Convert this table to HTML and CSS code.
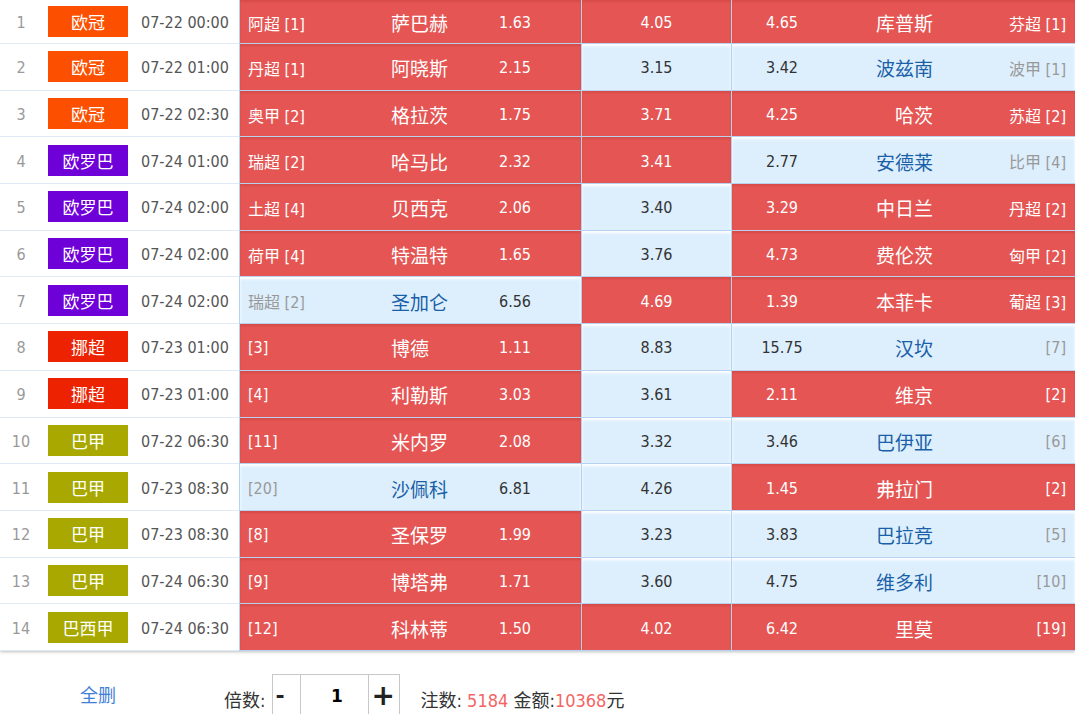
FILE: index.html
```html
<!DOCTYPE html>
<html lang="zh-CN">
<head>
<meta charset="utf-8">
<title>投注</title>
<link rel="stylesheet" href="styles.css">
</head>
<body>
<div class="table">
  <div class="row">
    <div class="no">1</div><div class="lg"><span class="badge ucl">欧冠</span></div><div class="time">07-22 00:00</div>
    <div class="home sel"><span class="lea">阿超 [1]</span><span class="team">萨巴赫</span><span class="odd">1.63</span></div>
    <div class="draw sel">4.05</div>
    <div class="away sel"><span class="odd">4.65</span><span class="team">库普斯</span><span class="lea">芬超 [1]</span></div>
  </div>
  <div class="row">
    <div class="no">2</div><div class="lg"><span class="badge ucl">欧冠</span></div><div class="time">07-22 01:00</div>
    <div class="home sel"><span class="lea">丹超 [1]</span><span class="team">阿晓斯</span><span class="odd">2.15</span></div>
    <div class="draw">3.15</div>
    <div class="away"><span class="odd">3.42</span><span class="team">波兹南</span><span class="lea">波甲 [1]</span></div>
  </div>
  <div class="row">
    <div class="no">3</div><div class="lg"><span class="badge ucl">欧冠</span></div><div class="time">07-22 02:30</div>
    <div class="home sel"><span class="lea">奥甲 [2]</span><span class="team">格拉茨</span><span class="odd">1.75</span></div>
    <div class="draw sel">3.71</div>
    <div class="away sel"><span class="odd">4.25</span><span class="team">哈茨</span><span class="lea">苏超 [2]</span></div>
  </div>
  <div class="row">
    <div class="no">4</div><div class="lg"><span class="badge uel">欧罗巴</span></div><div class="time">07-24 01:00</div>
    <div class="home sel"><span class="lea">瑞超 [2]</span><span class="team">哈马比</span><span class="odd">2.32</span></div>
    <div class="draw sel">3.41</div>
    <div class="away"><span class="odd">2.77</span><span class="team">安德莱</span><span class="lea">比甲 [4]</span></div>
  </div>
  <div class="row">
    <div class="no">5</div><div class="lg"><span class="badge uel">欧罗巴</span></div><div class="time">07-24 02:00</div>
    <div class="home sel"><span class="lea">土超 [4]</span><span class="team">贝西克</span><span class="odd">2.06</span></div>
    <div class="draw">3.40</div>
    <div class="away sel"><span class="odd">3.29</span><span class="team">中日兰</span><span class="lea">丹超 [2]</span></div>
  </div>
  <div class="row">
    <div class="no">6</div><div class="lg"><span class="badge uel">欧罗巴</span></div><div class="time">07-24 02:00</div>
    <div class="home sel"><span class="lea">荷甲 [4]</span><span class="team">特温特</span><span class="odd">1.65</span></div>
    <div class="draw">3.76</div>
    <div class="away sel"><span class="odd">4.73</span><span class="team">费伦茨</span><span class="lea">匈甲 [2]</span></div>
  </div>
  <div class="row">
    <div class="no">7</div><div class="lg"><span class="badge uel">欧罗巴</span></div><div class="time">07-24 02:00</div>
    <div class="home"><span class="lea">瑞超 [2]</span><span class="team">圣加仑</span><span class="odd">6.56</span></div>
    <div class="draw sel">4.69</div>
    <div class="away sel"><span class="odd">1.39</span><span class="team">本菲卡</span><span class="lea">葡超 [3]</span></div>
  </div>
  <div class="row">
    <div class="no">8</div><div class="lg"><span class="badge nor">挪超</span></div><div class="time">07-23 01:00</div>
    <div class="home sel"><span class="lea">[3]</span><span class="team">博德</span><span class="odd">1.11</span></div>
    <div class="draw">8.83</div>
    <div class="away"><span class="odd">15.75</span><span class="team">汉坎</span><span class="lea">[7]</span></div>
  </div>
  <div class="row">
    <div class="no">9</div><div class="lg"><span class="badge nor">挪超</span></div><div class="time">07-23 01:00</div>
    <div class="home sel"><span class="lea">[4]</span><span class="team">利勒斯</span><span class="odd">3.03</span></div>
    <div class="draw">3.61</div>
    <div class="away sel"><span class="odd">2.11</span><span class="team">维京</span><span class="lea">[2]</span></div>
  </div>
  <div class="row">
    <div class="no">10</div><div class="lg"><span class="badge bra">巴甲</span></div><div class="time">07-22 06:30</div>
    <div class="home sel"><span class="lea">[11]</span><span class="team">米内罗</span><span class="odd">2.08</span></div>
    <div class="draw">3.32</div>
    <div class="away"><span class="odd">3.46</span><span class="team">巴伊亚</span><span class="lea">[6]</span></div>
  </div>
  <div class="row">
    <div class="no">11</div><div class="lg"><span class="badge bra">巴甲</span></div><div class="time">07-23 08:30</div>
    <div class="home"><span class="lea">[20]</span><span class="team">沙佩科</span><span class="odd">6.81</span></div>
    <div class="draw">4.26</div>
    <div class="away sel"><span class="odd">1.45</span><span class="team">弗拉门</span><span class="lea">[2]</span></div>
  </div>
  <div class="row">
    <div class="no">12</div><div class="lg"><span class="badge bra">巴甲</span></div><div class="time">07-23 08:30</div>
    <div class="home sel"><span class="lea">[8]</span><span class="team">圣保罗</span><span class="odd">1.99</span></div>
    <div class="draw">3.23</div>
    <div class="away"><span class="odd">3.83</span><span class="team">巴拉竞</span><span class="lea">[5]</span></div>
  </div>
  <div class="row">
    <div class="no">13</div><div class="lg"><span class="badge bra">巴甲</span></div><div class="time">07-24 06:30</div>
    <div class="home sel"><span class="lea">[9]</span><span class="team">博塔弗</span><span class="odd">1.71</span></div>
    <div class="draw">3.60</div>
    <div class="away"><span class="odd">4.75</span><span class="team">维多利</span><span class="lea">[10]</span></div>
  </div>
  <div class="row">
    <div class="no">14</div><div class="lg"><span class="badge bra">巴西甲</span></div><div class="time">07-24 06:30</div>
    <div class="home sel"><span class="lea">[12]</span><span class="team">科林蒂</span><span class="odd">1.50</span></div>
    <div class="draw sel">4.02</div>
    <div class="away sel"><span class="odd">6.42</span><span class="team">里莫</span><span class="lea">[19]</span></div>
  </div>
</div>
<div class="footer">
  <div class="clear">全删</div>
  <div class="mult">
    <span class="label">倍数:</span>
    <div class="stepper">
      <span class="btn minus">-</span>
      <span class="val">1</span>
      <span class="btn plus">+</span>
    </div>
  </div>
  <div class="summary">注数: <span class="red">5184</span> 金额:<span class="red">10368</span>元</div>
</div>
</body>
</html>
```
FILE: styles.css
```css
* { box-sizing: border-box; }
html, body { margin: 0; padding: 0; background: #fff; }
body {
  font-family: "DejaVu Sans Condensed", "Noto Sans CJK SC", sans-serif;
  font-size: 16px;
  color: #333;
  width: 1075px;
  height: 714px;
  overflow: hidden;
}
.table {
  box-shadow: 0 1px 3px rgba(0,0,0,0.25);
}
.row {
  display: grid;
  grid-template-columns: 42px 92px 105px 342px 150px 1fr;
  height: 46.7px;
}
.row:first-child { height: 44px; }
.no, .lg, .time {
  display: flex;
  align-items: center;
  border-bottom: 1px solid #dfeaf7;
}
.no, .time { padding-top: 2px; }
.no { justify-content: center; color: #999; }
.lg { padding-left: 6px; }
.time { padding-left: 7px; color: #555; }
.badge {
  display: flex;
  align-items: center;
  justify-content: center;
  width: 80px;
  height: 31px;
  color: #fff;
  font-family: "Noto Sans CJK SC", sans-serif;
  font-size: 17px;
}
.ucl { background: #fc5000; }
.uel { background: #6e00d8; }
.nor { background: #ec2200; }
.bra { background: #a8a800; }

.home, .draw, .away {
  border-left: 1px solid #b7d2ee;
  border-bottom: 1px solid #b7d2ee;
  background: #ddeffd;
  box-shadow: inset 0 2px 3px #fff;
  display: grid;
  align-items: center;
  padding-top: 2px;
}
.home.sel, .draw.sel, .away.sel {
  background: #e45553;
  box-shadow: inset 0 2px 2px rgba(120,0,0,0.12);
  color: #fff;
}
.home {
  grid-template-columns: 143px 91px 66px 1fr;
  padding-left: 8px;
}
.draw { justify-content: center; text-align: center; }
.away {
  grid-template-columns: 100px 101px 1fr;
  padding-right: 9px;
}
.lea { color: #999; white-space: nowrap; }
.team {
  font-family: "Noto Sans CJK SC", sans-serif;
  font-size: 19px;
  color: #1a5fa8;
  white-space: nowrap;
}
.odd { text-align: center; }
.away .team, .away .lea { text-align: right; }
.sel .lea, .sel .team, .sel .odd { color: #fff; }

.footer {
  display: flex;
  align-items: center;
  padding-top: 23px;
  color: #333;
  font-size: 18px;
}
.clear {
  width: 196px;
  text-align: center;
  color: #3f80d6;
  padding-bottom: 4px;
}
.mult {
  display: flex;
  align-items: center;
  margin-left: 28px;
}
.label { margin-right: 7px; padding-top: 6px; }
.stepper {
  display: flex;
  height: 44px;
  border: 1px solid #c8c8c8;
}
.btn {
  display: flex;
  align-items: center;
  font-weight: bold;
  font-family: "DejaVu Sans", sans-serif;
  color: #222;
}
.minus { width: 27px; padding-left: 2px; font-size: 22px; }
.plus {
  width: 31px;
  padding-left: 2px;
  font-size: 28px;
  border-left: 1px solid #c8c8c8;
}
.val {
  width: 68px;
  display: flex;
  align-items: center;
  justify-content: center;
  font-weight: bold;
  font-family: "DejaVu Sans", sans-serif;
  font-size: 17px;
  color: #000;
  border-left: 1px solid #c8c8c8;
  padding-left: 4px;
}
.summary { margin-left: 20px; padding-top: 6px; }
.red { color: #f56464; }
```
